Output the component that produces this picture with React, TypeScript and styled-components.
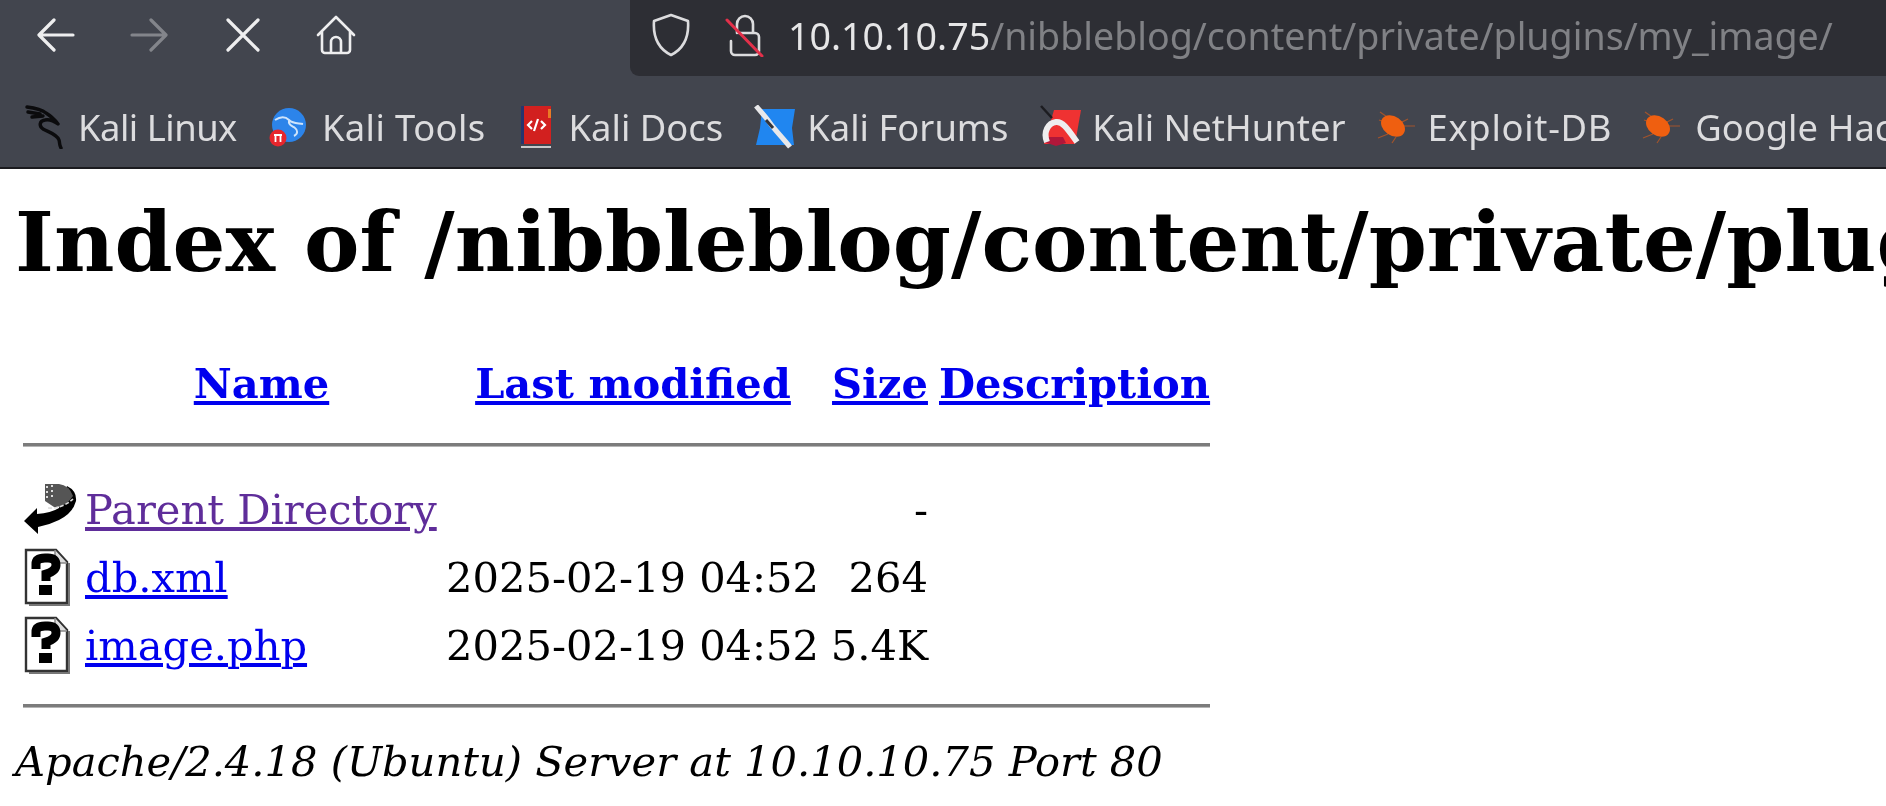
import styled, { createGlobalStyle } from "styled-components";

const GlobalStyle = createGlobalStyle`
	html, body {
		margin: 0;
		padding: 0;
		background: white;
		overflow: hidden;
	}
`;

const Page = styled.div`
	width: 1886px;
	height: 806px;
	overflow: hidden;
	display: flex;
	flex-direction: column;
`;

const Chrome = styled.header`
	background-color: #42454e;
	border-bottom: 2px solid #1b1b1f;
	flex-shrink: 0;
	font-family: "Noto Sans", sans-serif;
	filter: blur(0.5px);
`;

const NavBar = styled.div`
	display: flex;
	align-items: stretch;
	height: 76px;
`;

const NavButtons = styled.div`
	display: flex;
	align-items: center;
	width: 630px;
	padding: 0 0 6px 9px;
	box-sizing: border-box;
`;

const NavButton = styled.div`
	width: 93.5px;
	display: flex;
	justify-content: center;
`;

const UrlBar = styled.div`
	flex: 1;
	display: flex;
	align-items: center;
	background-color: #2d2e34;
	border-bottom-left-radius: 9px;
	padding-left: 21px;
	gap: 23px;
`;

const UrlIcons = styled.div`
	display: flex;
	align-items: center;
	gap: 34px;
	margin-top: -6px;
`;

const UrlText = styled.div`
	font-size: 37.6px;
	color: #808185;
	white-space: nowrap;
	margin-top: -6px;
`;

const Host = styled.span`
	color: #e6e6e7;
`;

const Bookmarks = styled.nav`
	display: flex;
	align-items: center;
	height: 91px;
	box-sizing: border-box;
	padding: 10px 0 0 25px;
	overflow: hidden;
	white-space: nowrap;
`;

const Bookmark = styled.div<{ $gap: number; $after: number; $track: number }>`
	display: flex;
	align-items: center;
	gap: ${(p) => p.$gap}px;
	margin-right: ${(p) => p.$after}px;
	letter-spacing: ${(p) => p.$track}px;
	flex-shrink: 0;
	font-size: 36.4px;
	color: #dcdcde;
`;

const Listing = styled.main`
	padding: 25px 0 0 15px;
	font-family: "DejaVu Serif", serif;
	font-size: 41.6px;
	color: black;
	white-space: nowrap;
	filter: blur(0.4px);
`;

const Heading = styled.h1`
	font-size: 83.2px;
	line-height: 97px;
	font-weight: bold;
	margin: 0 0 68px 0;
`;

const Table = styled.table`
	border-collapse: separate;
	border-spacing: 0;
	margin-left: 8px;
`;

const HeadCell = styled.th<{ $width?: number; $pad?: number }>`
	padding: 0 0 2px ${(p) => p.$pad ?? 0}px;
	height: 48px;
	text-align: center;
	font-weight: bold;
	width: ${(p) => (p.$width ? `${p.$width}px` : "auto")};
`;

const Cell = styled.td<{ $right?: boolean }>`
	padding: 0;
	height: 68px;
	text-align: ${(p) => (p.$right ? "right" : "left")};
	vertical-align: middle;
`;

const IconCell = styled(Cell)`
	line-height: 0;
`;

const FileLink = styled.a<{ $visited?: boolean }>`
	color: ${(p) => (p.$visited ? "#5f2d9a" : "#0000ee")};
	text-decoration: underline;
`;

const RuleCell = styled.td<{ $above: number; $below: number }>`
	padding: ${(p) => p.$above}px 0 ${(p) => p.$below}px;
	vertical-align: middle;
`;

const Rule = styled.hr`
	margin: 0;
	border: none;
	height: 3px;
	background-color: #7c7c7c;
	border-bottom: 1px solid #b5b5b5;
`;

const Address = styled.address`
	font-style: italic;
	line-height: 48px;
	margin: 20px 0 0 0;
`;

const line = { fill: "none", stroke: "#eeeeef", strokeWidth: 3.2, strokeLinecap: "round", strokeLinejoin: "round" } as const;

function BackIcon({ dim }: { dim?: boolean }) {
	return (
		<svg width="38" height="34" viewBox="0 0 38 34">
			<path {...line} stroke={dim ? "#83858b" : "#eeeeef"} d={dim ? "M2 17H35M21 2l15 15-15 15" : "M36 17H3M17 2L2 17l15 15"} />
		</svg>
	);
}

function CloseIcon() {
	return (
		<svg width="34" height="34" viewBox="0 0 34 34">
			<path {...line} d="M2 2l30 30M32 2L2 32" />
		</svg>
	);
}

function HomeIcon() {
	return (
		<svg width="40" height="40" viewBox="0 0 40 40">
			<path {...line} strokeWidth={2.6} d="M2 20L20 2l18 18M6 17v18a3 3 0 003 3h22a3 3 0 003-3V17M15 38V27a5 5 0 0110 0v11" />
		</svg>
	);
}

function ShieldIcon() {
	return (
		<svg width="40" height="44" viewBox="0 0 40 44">
			<path {...line} stroke="#dcdcde" strokeWidth={2.6} d="M20 2l17 6c1 14-3 27-17 34C6 35 2 22 3 8z" />
		</svg>
	);
}

function LockIcon() {
	return (
		<svg width="40" height="44" viewBox="0 0 40 44">
			<path {...line} stroke="#dcdcde" strokeWidth={2.6} d="M12 20v-9a8 8 0 0116 0v9M6 28v10a4 4 0 004 4h20a4 4 0 004-4V24a4 4 0 00-4-4H14" />
			<path d="M2 7l35 36" stroke="#e3304a" strokeWidth={3} strokeLinecap="round" />
		</svg>
	);
}

function DragonIcon() {
	return (
		<svg width="42" height="44" viewBox="0 0 42 44">
			<path
				fill="none"
				stroke="#0b0b0d"
				strokeWidth={3.4}
				strokeLinecap="round"
				strokeLinejoin="round"
				d="M2 2c8 1 14 2 19 6 5 3 9 7 12 11-4-3-8-5-13-4-6 1-6 6-2 9 5 3 14 5 16 11 1 3 0 5 2 8M3 7l12 2M7 12l11-1"
			/>
		</svg>
	);
}

function ToolsIcon() {
	return (
		<svg width="38" height="42" viewBox="0 0 38 42">
			<circle cx="20" cy="19" r="17" fill="#2c84ea" />
			<path d="M6 14c6-4 10-4 14 0s9 3 14 4M20 14c-1 5 3 6 6 8s3 6-1 8" fill="none" stroke="#cfe4fb" strokeWidth={2} />
			<circle cx="9" cy="32" r="8.5" fill="#e7262d" />
			<path d="M6.5 29v7M11.5 29v7M5 29h8" stroke="#fff" strokeWidth={1.8} fill="none" />
		</svg>
	);
}

function DocsIcon() {
	return (
		<svg width="32" height="44" viewBox="0 0 32 44">
			<rect x="1" y="1" width="30" height="38" fill="#d2201f" />
			<rect x="1" y="1" width="3" height="38" fill="#27346e" />
			<rect x="28" y="4" width="3" height="9" fill="#ea7a25" />
			<rect x="1" y="41" width="30" height="2" fill="#c9c9cb" />
			<path d="M12 16l-4 4 4 4M21 16l4 4-4 4M18 14l-4 12" fill="none" stroke="#fff" strokeWidth={2.2} />
		</svg>
	);
}

function ForumsIcon() {
	return (
		<svg width="42" height="44" viewBox="0 0 42 44">
			<path d="M8 4h33l-3 19 2 17H2l4-17z" fill="#2086f0" />
			<path d="M2 1c5 6 10 11 14 17s12 14 20 24" fill="none" stroke="#e8e8ea" strokeWidth={5} />
			<path d="M12 15l7 8" stroke="#33353c" strokeWidth={3} />
		</svg>
	);
}

function HunterIcon() {
	return (
		<svg width="42" height="44" viewBox="0 0 42 44">
			<path d="M14 5h27l-6 34H4z" fill="#ef3232" />
			<path d="M4 37l12 4 10-3-3-6H8z" fill="#b0173a" />
			<path d="M7 37c-4-10 1-19 9-20 7-1 13 9 21 20" fill="none" stroke="#eeeeef" strokeWidth={6} />
			<path d="M1 1l11 12" stroke="#1c1c20" strokeWidth={2.5} />
		</svg>
	);
}

function BugIcon() {
	return (
		<svg width="40" height="34" viewBox="0 0 40 34">
			<path d="M4 2l10 7M3 10l9 3M2 28l10-4M16 33l4-6M28 16h11M32 9l-6 3" stroke="#ef5f10" strokeWidth={1.2} opacity={0.55} />
			<ellipse cx="17" cy="16" rx="13" ry="9.5" transform="rotate(35 17 16)" fill="#ef5f10" />
		</svg>
	);
}

function BackDirIcon() {
	return (
		<svg width="54" height="52" viewBox="0 0 54 52">
			<path d="M1 38L14 25v6q14-1 22-6l8-22q10 5 9 15-3 12-17 19-10 5-21 7v7z" fill="#000" />
			<path d="M22 1h14q10 1 14 12-8 12-19 11l-9-6z" fill="#555" />
			<path d="M24 3v13M29 2v13" stroke="#fff" strokeWidth={1.6} strokeDasharray="2 3" />
			<path d="M25 25q14 1 25-9" fill="none" stroke="#ddd" strokeWidth={1.6} strokeDasharray="4 2" />
		</svg>
	);
}

function UnknownIcon() {
	return (
		<svg width="48" height="58" viewBox="0 0 48 58">
			<path d="M3 2h30l11 12v41H3z" fill="#fff" stroke="#333" strokeWidth={2.4} />
			<path d="M32 2v13h12" fill="#ddd" stroke="#888" strokeWidth={1.5} />
			<path d="M46 15v42H6" fill="none" stroke="#777" strokeWidth={2} />
			<path d="M13 21v-5q0-6 9-6h3q8 0 8 7 0 6-10 9v7" fill="none" stroke="#000" strokeWidth={9} />
			<rect x="16" y="37" width="13" height="10" fill="#000" />
		</svg>
	);
}

const bookmarks = [
	{ label: "Kali Linux", icon: <DragonIcon />, gap: 11, after: 32, track: -0.5 },
	{ label: "Kali Tools", icon: <ToolsIcon />, gap: 15, after: 34, track: 0.4 },
	{ label: "Kali Docs", icon: <DocsIcon />, gap: 17, after: 31, track: 0 },
	{ label: "Kali Forums", icon: <ForumsIcon />, gap: 11, after: 32, track: 0 },
	{ label: "Kali NetHunter", icon: <HunterIcon />, gap: 10, after: 31, track: 0 },
	{ label: "Exploit-DB", icon: <BugIcon />, gap: 11, after: 29, track: 0.7 },
	{ label: "Google Hacking DB", icon: <BugIcon />, gap: 14, after: 0, track: 0 },
];

const files = [
	{ name: "db.xml", modified: "2025-02-19 04:52", size: "264" },
	{ name: "image.php", modified: "2025-02-19 04:52", size: "5.4K" },
];

export default function App() {
	return (
		<Page>
			<GlobalStyle />
			<Chrome>
				<NavBar>
					<NavButtons>
						<NavButton>
							<BackIcon />
						</NavButton>
						<NavButton>
							<BackIcon dim />
						</NavButton>
						<NavButton>
							<CloseIcon />
						</NavButton>
						<NavButton>
							<HomeIcon />
						</NavButton>
					</NavButtons>
					<UrlBar>
						<UrlIcons>
							<ShieldIcon />
							<LockIcon />
						</UrlIcons>
						<UrlText>
							<Host>10.10.10.75</Host>/nibbleblog/content/private/plugins/my_image/
						</UrlText>
					</UrlBar>
				</NavBar>
				<Bookmarks>
					{bookmarks.map((b) => (
						<Bookmark key={b.label} $gap={b.gap} $after={b.after} $track={b.track}>
							{b.icon}
							{b.label}
						</Bookmark>
					))}
				</Bookmarks>
			</Chrome>
			<Listing>
				<Heading>Index of /nibbleblog/content/private/plugins/my_image</Heading>
				<Table>
					<thead>
						<tr>
							<HeadCell $width={62} />
							<HeadCell $width={353}>
								<FileLink>Name</FileLink>
							</HeadCell>
							<HeadCell $width={372} $pad={9}>
								<FileLink>Last modified</FileLink>
							</HeadCell>
							<HeadCell $width={96} $pad={13}>
								<FileLink>Size</FileLink>
							</HeadCell>
							<HeadCell $pad={11}>
								<FileLink>Description</FileLink>
							</HeadCell>
						</tr>
						<tr>
							<RuleCell colSpan={5} $above={33} $below={28}>
								<Rule />
							</RuleCell>
						</tr>
					</thead>
					<tbody>
						<tr>
							<IconCell>
								<BackDirIcon />
							</IconCell>
							<Cell>
								<FileLink $visited>Parent Directory</FileLink>
							</Cell>
							<Cell />
							<Cell $right>-</Cell>
							<Cell />
						</tr>
						{files.map((f) => (
							<tr key={f.name}>
								<IconCell>
									<UnknownIcon />
								</IconCell>
								<Cell>
									<FileLink>{f.name}</FileLink>
								</Cell>
								<Cell $right>{f.modified}</Cell>
								<Cell $right>{f.size}</Cell>
								<Cell />
							</tr>
						))}
						<tr>
							<RuleCell colSpan={5} $above={25} $below={10}>
								<Rule />
							</RuleCell>
						</tr>
					</tbody>
				</Table>
				<Address>Apache/2.4.18 (Ubuntu) Server at 10.10.10.75 Port 80</Address>
			</Listing>
		</Page>
	);
}
